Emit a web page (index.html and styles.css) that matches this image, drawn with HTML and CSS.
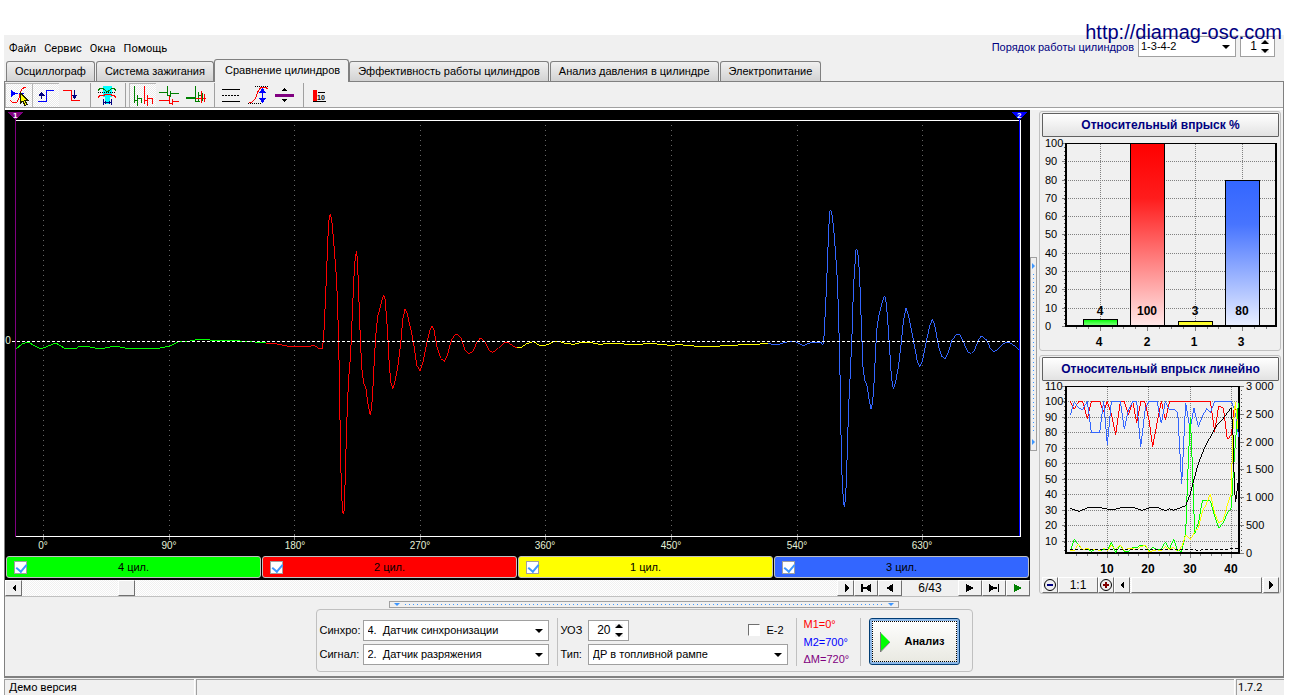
FILE: index.html
```html
<!DOCTYPE html>
<html lang="ru">
<head>
<meta charset="utf-8">
<title>Сравнение цилиндров</title>
<link rel="stylesheet" href="styles.css">
</head>
<body>
<a class="site-link" href="#site">http://diamag-osc.com</a>
<div class="app">
  <header class="topbar">
    <nav class="menu">
      <a href="#file">Файл</a><a href="#service">Сервис</a><a href="#windows">Окна</a><a href="#help">Помощь</a>
    </nav>
    <div class="order">
      <label for="order">Порядок работы цилиндров</label>
      <span class="select order-select"><select id="order"><option>1-3-4-2</option></select></span>
      <span class="spin"><input type="text" value="1" aria-label="Номер цилиндра"><span class="spin-btns"><button type="button" class="up" aria-label="Больше"></button><button type="button" class="down" aria-label="Меньше"></button></span></span>
    </div>
  </header>

  <nav class="tabs">
    <button type="button" class="tab">Осциллограф</button>
    <button type="button" class="tab">Система зажигания</button>
    <button type="button" class="tab active">Сравнение цилиндров</button>
    <button type="button" class="tab">Эффективность работы цилиндров</button>
    <button type="button" class="tab">Анализ давления в цилиндре</button>
    <button type="button" class="tab">Электропитание</button>
  </nav>

  <main class="page">
    <div class="toolbar">
      <button type="button" class="tool pressed" aria-label="Курсор">
        <svg viewBox="5 83 27 24"><path d="M10 100q2 3 5 3t5-9q1-6 6-7" fill="none" stroke="#f00"/><path d="M11 90v7l5-3.500z" fill="#00f"/><path d="M16 93.500h9" stroke="#00f" stroke-dasharray="2 1"/><path d="M20.500 93v10l2.300-2 2.200 4.500 2-1-2-4h3z" fill="#ff0" stroke="#220"/></svg></button>
      <button type="button" class="tool pressed" aria-label="Передний фронт">
        <svg viewBox="32 83 27 24"><path d="M38 101.500h8.500v-11H54" fill="none" stroke="#00f"/><path d="M41.500 99v-7" stroke="#000080"/><path d="M38.500 95.500h6l-3-4z" fill="#000080"/></svg></button>
      <button type="button" class="tool" aria-label="Задний фронт">
        <svg viewBox="59 83 27 24"><path d="M63 90.500h8.500v10H80" fill="none" stroke="#f00"/><path d="M74.500 90v7" stroke="#000080"/><path d="M71.500 95h6l-3 4z" fill="#000080"/></svg></button>
      <i class="sep"></i>
      <button type="button" class="tool" aria-label="Интервал">
        <svg viewBox="94 83 27 24"><path d="M103 86h9v11h-9zM105 97h5v7h-5z" fill="#0ff"/><path d="M98 90.500l2-2h3l4 3h1l4-3h2l2 2" fill="none" stroke="#008000"/><path d="M98 92.500h18" stroke="#000" stroke-dasharray="1 1"/><path d="M98 97.500l2-2h3l3-1h4l3 1h1l2 2" fill="none" stroke="#f00"/><path d="M103.500 99v6M111.500 99v6M104 102.500h7M105.500 101v3M109.500 101v3" stroke="#000080"/></svg></button>
      <i class="sep"></i>
      <button type="button" class="tool pressed" aria-label="Последовательно">
        <svg viewBox="129 83 27 24"><path d="M134.500 86v17M134 100.500h4M137.500 95v11M138 98.500h3.500v4" fill="none" stroke="#008000"/><path d="M144.500 86v18M144 100.500h4M147.500 95v11M148 98.500h4.500v5" fill="none" stroke="#f00"/></svg></button>
      <button type="button" class="tool" aria-label="Друг под другом">
        <svg viewBox="156 83 27 24"><path d="M159 92.500h9M167.500 86v10M168 95.500h3M170.500 91v6M171 93.500h8" fill="none" stroke="#008000"/><path d="M159 100.500h11M169.500 96v8M170 103.500h3M172.500 99v6M173 101.500h6" fill="none" stroke="#f00"/></svg></button>
      <button type="button" class="tool" aria-label="Наложение">
        <svg viewBox="183 83 27 24"><path d="M186 98h9" stroke="#008000" stroke-width="2"/><path d="M195.500 86v16M196 101.500h4M198.500 92v10M199 95.500h3" fill="none" stroke="#008000"/><path d="M196 98.500h10M201.500 91v12M204.500 94v8" fill="none" stroke="#f00"/><path d="M202.500 93v8" stroke="#008000"/></svg></button>
      <i class="sep"></i>
      <button type="button" class="tool" aria-label="Линии">
        <svg viewBox="218 83 27 24"><path d="M222 89.500h18M222 101.500h18" stroke="#000"/><path d="M222 95.500h18" stroke="#000" stroke-dasharray="2 1"/></svg></button>
      <button type="button" class="tool" aria-label="Размах">
        <svg viewBox="245 83 27 24"><path d="M249 103q5-1 7-6 2-8 6-10h3l3 2" fill="none" stroke="#f00"/><path d="M255 86.500h13M248 103.500h14" stroke="#000" stroke-dasharray="1 1"/><path d="M262.500 91v9" stroke="#00f"/><path d="M259 93l3.500-5 3.500 5zM259 98l3.500 5 3.500-5z" fill="#00f"/></svg></button>
      <button type="button" class="tool" aria-label="Сдвиг">
        <svg viewBox="272 83 27 24"><path d="M275 94h19v3h-19z" fill="#800080"/><path d="M282 91l2.500-3 2.500 3zM282 99l2.500 3 2.500-3z"/></svg></button>
      <i class="sep"></i>
      <button type="button" class="tool" aria-label="Усреднение">
        <svg viewBox="307 83 27 24"><path d="M313 90h4v11h-4z" fill="#f00"/><path d="M313 101.500h13M318 92.500h7" stroke="#000"/><text x="317" y="100" class="tiny">10</text></svg></button>
    </div>

    <div class="work">
      <section class="scope">
        <svg class="wave" viewBox="5 110 1025 446" role="img" aria-label="Осциллограмма">
          <path class="vgrid" d="M43.500 125V536M169.500 125V536M294.500 125V536M420.500 125V536M545.500 125V536M671.500 125V536M797.500 125V536M922.500 125V536"/>
          <path class="tick" d="M43.500 534v6M169.500 534v6M294.500 534v6M420.500 534v6M545.500 534v6M671.500 534v6M797.500 534v6M922.500 534v6"/>
          <path class="frame" d="M16 120.500H1020.500V536.500H16"/>
          <path d="M15.500 119V537" stroke="#800080"/><path d="M1019.500 119V536" stroke="#00f"/>
          <path d="M8 112h15l-7.500 8z" fill="#800080"/><path d="M1012 112h15l-7.500 8z" fill="#00f"/>
          <text class="mark" x="13" y="118">1</text><text class="mark" x="1017" y="118">2</text>
          <g class="trace">
            <polyline stroke="#0f0" points="16,349 22,344 28,342 35,346 41,349 48,346 56,343 64,348 75,349 80,346 90,347 100,349 115,346 125,348 150,349 160,348 170,346 178,342 190,341 200,339 210,340 225,340 240,341 255,342 266,343"/>
          </g>
          <g class="trace fine" transform="translate(240 190) scale(.33333)">
            <polyline stroke="#f00" points="78,460 105,461 140,468 195,469 205,471 222,465 235,474 247,477 251,440 254,380 257,315 260,240 263,158 266,98 269,74 272,74 277,107 283,180 289,258 292,325 295,423 298,551 300,687 302,815 305,918 308,965 310,973 313,960 317,812 320,710 323,627 326,565 332,490 338,345 341,280 344,220 349,184 352,205 356,305 359,393 362,473 366,540 371,580 377,590 382,630 388,662 391,676 395,652 398,608 401,548 407,440 413,380 425,335 431,314 435,326 439,375 443,430 448,530 453,578 458,596 464,580 475,520 483,450 488,390 495,358 500,365 515,430 523,475 530,525 540,542 548,520 560,460 570,420 576,408 582,420 592,475 602,505 613,515 622,495 634,452 642,437 652,432 662,442 675,480 686,491 698,485 712,455 721,444 735,455 748,482 758,487 775,475 792,458 805,458 820,468 832,474"/>
            <polyline stroke="#ff0" points="832,474 842,474 860,461 880,455 898,466 920,465 945,454 960,455 975,460 1000,463 1020,458 1050,457 1080,463 1110,460 1150,462 1190,464 1220,461 1250,462 1290,466 1320,464 1360,468 1400,470 1440,468 1480,466 1520,463 1550,463 1583,460"/>
          </g>
          <g class="trace fine" transform="translate(760 190) scale(.33333)">
            <polyline stroke="#36f" points="23,460 50,465 80,456 105,455 130,467 150,459 185,458 188,466 191,458 194,400 197,345 200,275 206,118 210,62 214,62 220,105 226,180 232,270 235,355 238,467 241,597 243,732 246,855 250,932 253,952 257,920 260,845 263,745 266,650 271,545 277,410 280,300 284,235 288,180 292,180 296,210 300,290 305,430 309,530 314,572 320,582 326,620 333,658 337,640 341,600 344,540 350,420 355,385 366,338 374,317 379,340 384,405 389,480 394,560 400,596 407,575 416,525 424,455 430,395 438,354 445,375 460,450 472,515 479,531 488,510 500,450 510,405 517,388 524,405 536,470 546,500 556,506 564,490 576,450 590,433 600,435 612,460 624,487 634,490 644,480 656,448 664,438 680,450 692,477 702,485 715,477 730,461 742,456 758,463 776,478"/>
          </g>
          <path class="zero" d="M12 341.500H1018"/>
          <g class="deg"><text x="8" y="344">0</text><text x="43" y="549">0°</text><text x="169" y="549">90°</text><text x="295" y="549">180°</text><text x="420" y="549">270°</text><text x="545" y="549">360°</text><text x="671" y="549">450°</text><text x="797" y="549">540°</text><text x="922" y="549">630°</text></g>
        </svg>
        <div class="legend">
          <label class="cyl green"><input type="checkbox" checked><span>4 цил.</span></label>
          <label class="cyl red"><input type="checkbox" checked><span>2 цил.</span></label>
          <label class="cyl yellow"><input type="checkbox" checked><span>1 цил.</span></label>
          <label class="cyl blue"><input type="checkbox" checked><span>3 цил.</span></label>
        </div>
        <div class="scroller">
          <button type="button" class="sbtn" aria-label="Влево"><svg viewBox="0 0 10 10"><path d="M7 1v8L3 5z"/></svg></button>
          <input type="range" class="track" min="0" max="100" value="12" aria-label="Положение">
          <button type="button" class="sbtn" aria-label="Вправо"><svg viewBox="0 0 10 10"><path d="M4 1v8l4-4z"/></svg></button>
          <button type="button" class="nav-btn" aria-label="Первый кадр"><svg viewBox="0 0 12 10"><path d="M1 1h1.500v8H1zM11 1v8L6 6H3V4h3z"/></svg></button>
          <button type="button" class="nav-btn" aria-label="Предыдущий кадр"><svg viewBox="0 0 12 10"><path d="M9 1v8L2 5z"/></svg></button>
          <output class="frame-no">6/43</output>
          <button type="button" class="nav-btn" aria-label="Следующий кадр"><svg viewBox="0 0 12 10"><path d="M2 1v8l8-4z"/></svg></button>
          <button type="button" class="nav-btn" aria-label="Последний кадр"><svg viewBox="0 0 12 10"><path d="M9.500 1H11v8H9.500zM1 1v8l5-3h3V4H6z"/></svg></button>
          <button type="button" class="nav-btn" aria-label="Пуск"><svg viewBox="0 0 12 10"><path d="M2 1v8l8-4z" fill="#008000"/></svg></button>
        </div>
      </section>

      <div class="vsplit"><i class="tri-r"></i><i class="dots"></i><i class="tri-r"></i></div>

      <aside class="side">
        <section class="group">
          <button type="button" class="caption">Относительный впрыск %</button>
          <svg class="chart" viewBox="1042 137 237 213" role="img" aria-label="Относительный впрыск %">
            <defs>
              <linearGradient id="g-red" x2="0" y2="1"><stop stop-color="#f00"/><stop offset=".3" stop-color="#ff1c1c"/><stop offset="1" stop-color="#ffe8e8"/></linearGradient>
              <linearGradient id="g-blue" x2="0" y2="1"><stop stop-color="#36f"/><stop offset=".3" stop-color="#4774ff"/><stop offset="1" stop-color="#e8eeff"/></linearGradient>
              <linearGradient id="g-green" x2="0" y2="1"><stop stop-color="#0f0"/><stop offset="1" stop-color="#80ff80"/></linearGradient>
              <linearGradient id="g-yellow" x2="0" y2="1"><stop stop-color="#ff0"/><stop offset="1" stop-color="#ffff60"/></linearGradient>
            </defs>
            <path class="cgrid" d="M1066 161.500H1275M1066 180.500H1275M1066 198.500H1275M1066 216.500H1275M1066 234.500H1275M1066 253.500H1275M1066 271.500H1275M1066 289.500H1275M1066 308.500H1275M1100.500 144V325M1147.500 144V325M1195.500 144V325M1242.500 144V325"/>
            <path class="ctick" d="M1062 143.500h4M1062 161.500h4M1062 180.500h4M1062 198.500h4M1062 216.500h4M1062 234.500h4M1062 253.500h4M1062 271.500h4M1062 289.500h4M1062 308.500h4M1062 326.500h4M1076.500 327v2M1088.500 327v2M1100.500 327v4M1112.500 327v2M1123.500 327v2M1135.500 327v2M1147.500 327v4M1159.500 327v2M1171.500 327v2M1183.500 327v2M1195.500 327v4M1207.500 327v2M1218.500 327v2M1230.500 327v2M1242.500 327v4M1254.500 327v2M1266.500 327v2"/>
            <path d="M1064.500 147V325" stroke="#555" stroke-dasharray="1 3"/>
            <g stroke="#000"><rect x="1083.500" y="319.500" width="34" height="6" fill="url(#g-green)"/><rect x="1130.500" y="143.500" width="34" height="182" fill="url(#g-red)"/><rect x="1178.500" y="321.500" width="34" height="4" fill="url(#g-yellow)"/><rect x="1225.500" y="180.500" width="34" height="145" fill="url(#g-blue)"/></g>
            <path class="plot" d="M1066 143V326H1276V143"/><path d="M1065 143.500H1277" stroke="#000"/>
            <g class="axis"><text x="1045" y="147">100</text><text x="1045" y="165">90</text><text x="1045" y="184">80</text><text x="1045" y="202">70</text><text x="1045" y="220">60</text><text x="1045" y="238">50</text><text x="1045" y="257">40</text><text x="1045" y="275">30</text><text x="1045" y="293">20</text><text x="1045" y="312">10</text><text x="1045" y="330">0</text></g>
            <g class="value"><text x="1100" y="315">4</text><text x="1147" y="315">100</text><text x="1195" y="315">3</text><text x="1242" y="315">80</text><text x="1099" y="346">4</text><text x="1147" y="346">2</text><text x="1194" y="346">1</text><text x="1241" y="346">3</text></g>
          </svg>
        </section>

        <section class="group">
          <button type="button" class="caption">Относительный впрыск линейно</button>
          <svg class="chart" viewBox="1042 381 237 196" role="img" aria-label="Относительный впрыск линейно">
            <path class="cgrid" d="M1066 401.500H1239M1066 417.500H1239M1066 432.500H1239M1066 448.500H1239M1066 463.500H1239M1066 479.500H1239M1066 494.500H1239M1066 510.500H1239M1066 525.500H1239M1066 541.500H1239M1107.500 387V552M1148.500 387V552M1190.500 387V552M1231.500 387V552"/>
            <path class="ctick" d="M1062 386.500h4M1062 401.500h4M1062 417.500h4M1062 432.500h4M1062 448.500h4M1062 463.500h4M1062 479.500h4M1062 494.500h4M1062 510.500h4M1062 525.500h4M1062 541.500h4M1240 386.500h4M1240 414.500h4M1240 442.500h4M1240 469.500h4M1240 497.500h4M1240 525.500h4M1240 553.500h4M1076.500 554v2M1087.500 554v2M1097.500 554v2M1107.500 554v4M1118.500 554v2M1128.500 554v2M1138.500 554v2M1148.500 554v4M1159.500 554v2M1169.500 554v2M1180.500 554v2M1190.500 554v4M1200.500 554v2M1211.500 554v2M1221.500 554v2M1231.500 554v4"/>
            <path d="M1064.500 390V552M1241.500 390V552" stroke="#555" stroke-dasharray="1 3"/>
            <path class="plot" d="M1066 386V553H1239V386"/><path d="M1065 386.500H1240" stroke="#000"/>
            <g class="trace fine" transform="translate(1030 350) scale(.33333)">
              <polyline stroke="#f00" points="121,154 133,178 146,154 158,154 172,206 184,154 209,154 221,186 232,154 246,200 257,254 271,154 283,154 295,195 308,154 320,218 333,154 344,154 357,210 368,290 381,220 394,154 406,210 419,154 541,154 554,245 566,168 580,174 592,268 604,255 612,180 622,180"/>
              <polyline stroke="#36f" points="121,194 133,156 146,175 158,178 172,154 184,247 209,247 221,154 232,284 244,154 271,154 283,238 295,180 308,154 320,154 332,291 346,175 357,154 381,154 394,220 406,154 418,178 431,178 443,187 455,402 467,158 480,238 492,175 505,230 517,200 530,175 541,188 554,154 604,154 612,175 620,210 626,262"/>
              <polyline stroke="#0f0" points="121,604 133,568 145,584 158,600 172,597 184,604 197,597 210,603 221,597 233,598 244,576 257,608 271,585 283,604 295,604 308,592 320,594 332,585 346,587 357,602 368,592 381,598 394,598 406,576 418,598 431,568 443,602 455,604 467,550 475,330 481,201 488,370 494,553 505,520 517,452 541,452 554,498 566,535 580,518 592,490 604,473 611,350 625,160"/>
              <polyline stroke="#ff0" points="121,602 133,602 145,582 158,600 172,595 184,600 197,597 210,603 221,595 233,602 244,585 257,598 271,585 283,602 295,594 308,596 320,600 332,590 346,586 357,605 381,599 394,602 406,590 418,598 431,592 443,604 455,590 467,555 481,569 494,545 505,535 517,485 530,460 541,432 554,490 566,518 580,510 592,465 604,428 608,250 616,155 624,238"/>
              <polyline stroke="#000" points="121,475 146,484 172,474 197,471 221,475 246,480 271,474 308,472 337,481 362,472 381,472 406,482 418,476 431,481 443,476 455,472 467,467 480,435 492,388 505,340 517,310 530,280 543,258 556,232 580,205 604,173 610,270 613,415 617,457 620,430 625,390"/>
              <polyline stroke="#000" stroke-dasharray="9 6" points="121,600 460,600 480,598 505,601 530,598 555,600 590,600 605,596 625,596"/>
            </g>
            <g class="axis"><text x="1045" y="390">110</text><text x="1045" y="405">100</text><text x="1045" y="421">90</text><text x="1045" y="436">80</text><text x="1045" y="452">70</text><text x="1045" y="467">60</text><text x="1045" y="483">50</text><text x="1045" y="498">40</text><text x="1045" y="514">30</text><text x="1045" y="529">20</text><text x="1045" y="545">10</text><text x="1246" y="390">3 000</text><text x="1246" y="418">2 500</text><text x="1246" y="446">2 000</text><text x="1246" y="473">1 500</text><text x="1246" y="501">1 000</text><text x="1246" y="529">500</text><text x="1246" y="557">0</text></g>
            <g class="value"><text x="1107" y="573">10</text><text x="1148" y="573">20</text><text x="1190" y="573">30</text><text x="1231" y="573">40</text></g>
          </svg>
          <div class="zoombar">
            <button type="button" class="sbtn" aria-label="Уменьшить"><svg viewBox="0 0 14 14" class="big"><circle cx="7" cy="7" r="5.500" fill="none" stroke="#000"/><path d="M4 6h6v2H4z" fill="#000080"/></svg></button>
            <button type="button" class="sbtn ratio">1:1</button>
            <button type="button" class="sbtn" aria-label="Увеличить"><svg viewBox="0 0 14 14" class="big"><circle cx="7" cy="7" r="5.500" fill="none" stroke="#000"/><path d="M4 6h2V4h2v2h2v2H8v2H6V8H4z" fill="#800000"/></svg></button>
            <button type="button" class="sbtn" aria-label="Влево"><svg viewBox="0 0 10 10"><path d="M7 1v8L3 5z"/></svg></button>
            <input type="range" class="track full" aria-label="Прокрутка графика">
            <button type="button" class="sbtn" aria-label="Вправо"><svg viewBox="0 0 10 10"><path d="M3 1v8l4-4z"/></svg></button>
          </div>
        </section>
      </aside>
    </div>

    <div class="hsplit"><i class="tri-d"></i><i class="dots"></i><i class="tri-d"></i></div>

    <form class="settings">
      <div class="fields sources">
        <label for="sync">Синхро:</label>
        <span class="select"><select id="sync"><option>4.&nbsp; Датчик синхронизации</option></select></span>
        <label for="signal">Сигнал:</label>
        <span class="select"><select id="signal"><option>2.&nbsp; Датчик разряжения</option></select></span>
      </div>
      <div class="fields kind">
        <label for="uoz">УОЗ</label>
        <div class="uoz-row">
          <span class="spin"><input id="uoz" type="text" value="20"><span class="spin-btns"><button type="button" class="up" aria-label="Больше"></button><button type="button" class="down" aria-label="Меньше"></button></span></span>
          <label class="e2"><input type="checkbox">E-2</label>
        </div>
        <label for="type">Тип:</label>
        <span class="select"><select id="type"><option>ДР в топливной рампе</option></select></span>
      </div>
      <div class="marks"><span class="m1">M1=0°</span><span class="m2">M2=700°</span><span class="dm">ΔM=720°</span></div>
      <button type="button" class="analyse"><span><svg viewBox="0 0 10 20"><path d="M0 0v20l10-10z" fill="#0f0"/><path d="M.5 0v20l9.500-10" fill="none" stroke="#777"/></svg>Анализ</span></button>
    </form>
  </main>

  <footer class="status"><span>Демо версия</span><span></span><span>1.7.2</span></footer>
</div>
</body>
</html>
```
FILE: styles.css
```css
* { box-sizing: border-box; }
body {
  margin: 0;
  padding: 35px 12px 5px 4px;
  background: #fff;
  color: #000;
  font: 11px/13px "Liberation Sans", Arial, sans-serif;
}
button, input, select { font: inherit; color: inherit; margin: 0; padding: 0; }
a { color: inherit; text-decoration: none; }
svg { display: block; shape-rendering: crispEdges; }

.site-link {
  position: absolute;
  top: 20px;
  right: 14px;
  z-index: 2;
  color: #000080;
  font-size: 20px;
  line-height: 24px;
}
.app { background: #f0f0f0; }
.topbar { display: flex; justify-content: space-between; height: 24px; padding: 1px 9px 0 5px; }
.menu { display: flex; gap: 8px; padding-top: 6px; font-family: Roboto, sans-serif; }
.order { display: flex; gap: 4px; color: #000080; }
.order > label { padding: 5px 0 0; }
.order-select { width: 98px; }
.order .spin { width: 35px; }

/* drop-downs and spinners */
.select { position: relative; display: block; height: 21px; color: #000; }
.select select {
  display: block;
  width: 100%;
  height: 100%;
  padding: 0 16px 0 4px;
  appearance: none;
  border: 1px solid #a0a0a0;
  border-radius: 0;
  background: #fff;
}
.order-select select { padding-left: 2px; }
.select::after {
  content: "";
  position: absolute;
  right: 6px;
  top: 9px;
  border: 4px solid transparent;
  border-top-color: #000;
  border-bottom: 0;
  pointer-events: none;
}
.spin { display: flex; height: 21px; width: 41px; border: 1px solid #a0a0a0; background: #fff; color: #000; }
.spin input { flex: 1; min-width: 0; border: 0; background: none; text-align: right; font-size: 12px; }
.spin-btns { display: flex; flex-direction: column; justify-content: center; gap: 5px; padding: 0 5px 0 4px; }
.spin-btns button { width: 0; height: 0; border: 4px solid transparent; }
.spin-btns .up { border-top: 0; border-bottom-color: #000; }
.spin-btns .down { border-bottom: 0; border-top-color: #000; }

/* tabs */
.tabs { display: flex; align-items: flex-end; height: 22px; padding-left: 2px; gap: 1px; }
.tab {
  height: 20px;
  padding: 0 8px;
  border: 1px solid #808080;
  border-bottom: 0;
  border-radius: 3px 3px 0 0;
  background: linear-gradient(#f0f0f0, #d2d2d2);
  white-space: nowrap;
}
.tab.active {
  z-index: 1;
  height: 23px;
  margin: 0 -1px -1px;
  padding: 0 8px 1px 10px;
  background: #f0f0f0;
}

.page { border: 1px solid #808080; border-bottom-width: 2px; }
.toolbar { display: flex; height: 28px; padding-top: 1px; border-bottom: 2px solid #fff; box-shadow: inset 0 -1px #a0a0a0; }
.tool { width: 27px; height: 24px; border: 0; background: none; }
.tool svg { width: 27px; height: 24px; }
.tool.pressed {
  background: repeating-conic-gradient(#fff 0 25%, #eaeaea 0 50%) 0 0 / 2px 2px;
  box-shadow: inset 1px 1px #b4b4b4;
}
.tiny { font: bold 7px "Liberation Sans", sans-serif; }
.sep { width: 8px; height: 24px; background: linear-gradient(#a0a0a0, #a0a0a0) 4px 0 / 1px 24px no-repeat; }

/* main work area */
.work { display: grid; grid-template-columns: minmax(0, 1fr) 9px 242px; padding-right: 2px; }
.scope { border-bottom: 1px solid #c0c0c0; }
.wave { width: 100%; background: #000; }
.vgrid { stroke: #666; stroke-dasharray: 1 4; }
.tick { stroke: #808080; }
.frame { fill: none; stroke: #fff; }
.zero { stroke: #fff; stroke-dasharray: 3 2; }
.trace { fill: none; stroke-width: 1; }
.trace.fine { stroke-width: 3; }
.mark { fill: #fff; font: bold 8px "Liberation Sans", sans-serif; }
.deg { fill: #e4f0d8; font-size: 10px; text-anchor: middle; }

.legend { display: grid; grid-template-columns: repeat(4, 1fr); gap: 1px; padding: 0 1px 2px; background: #000; }
.cyl {
  display: flex;
  align-items: center;
  height: 22px;
  padding: 0 20px 0 7px;
  border: 1px solid #c0c0c0;
  border-radius: 3px;
  text-align: center;
}
.cyl span { flex: 1; }
.cyl input {
  width: 13px;
  height: 13px;
  appearance: none;
  border: 1px solid #a0a0a0;
  background: #fff;
}
.cyl input::before {
  content: "";
  display: block;
  width: 5px;
  height: 8px;
  margin: 0 0 0 3px;
  border: solid #3c96ff;
  border-width: 0 2px 2px 0;
  transform: rotate(40deg);
}
.green { background: #0f0; }
.red { background: #f00; }
.yellow { background: #ff0; }
.blue { background: #36f; }

.scroller, .zoombar { display: flex; height: 16px; }
.sbtn, .nav-btn {
  display: flex;
  align-items: center;
  justify-content: center;
  width: 17px;
  border: 1px solid;
  border-color: #fff #707070 #707070 #fff;
  background: #f0f0f0;
}
.nav-btn { width: 24px; }
.sbtn svg { width: 10px; height: 10px; }
.sbtn svg.big { width: 14px; height: 14px; flex: none; shape-rendering: auto; }
.nav-btn svg { width: 12px; height: 10px; }
.track {
  flex: 1;
  min-width: 0;
  height: 16px;
  appearance: none;
  background: repeating-conic-gradient(#fff 0 25%, #f0f0f0 0 50%) 0 0 / 2px 2px;
}
.track::-webkit-slider-thumb {
  appearance: none;
  width: 17px;
  height: 16px;
  border: 1px solid;
  border-color: #fff #707070 #707070 #fff;
  background: #f0f0f0;
}
.track.full::-webkit-slider-thumb { width: 131px; }
.frame-no { width: 56px; text-align: center; font-size: 12px; line-height: 17px; }

/* collapse handles */
.vsplit, .hsplit { display: flex; align-items: center; justify-content: space-between; border: 1px solid #a0a0a0; }
.vsplit { flex-direction: column; align-self: center; width: 7px; height: 194px; padding: 5px 0; }
.hsplit { width: 510px; height: 7px; margin: 4px auto 1px; padding: 0 4px; }
.vsplit .dots { flex: 1; width: 1px; margin: 5px 0; background: repeating-linear-gradient(#3c96ff 0 1px, transparent 1px 4px); }
.hsplit .dots { flex: 1; height: 1px; margin: 0 5px; background: repeating-linear-gradient(90deg, #3c96ff 0 1px, transparent 1px 4px); }
.tri-r { border: 3px solid transparent; border-left-color: #3c96ff; border-right: 0; }
.tri-d { border: 3px solid transparent; border-top-color: #3c96ff; border-bottom: 0; }

/* charts */
.side { display: flex; flex-direction: column; gap: 4px; padding-top: 1px; }
.group { padding: 1px 1px 0 2px; border: 1px solid #c0c0c0; border-radius: 3px; }
.caption {
  display: block;
  width: 100%;
  height: 24px;
  border: 1px solid #606060;
  border-radius: 1px;
  background: linear-gradient(#fff, #e2e2e2);
  color: #000080;
  font-size: 12px;
  font-weight: bold;
}
.chart { width: 100%; }
.cgrid { stroke: #808080; stroke-dasharray: 1 1; }
.ctick { stroke: #808080; }
.plot { fill: none; stroke: #000; stroke-width: 2; }
.axis { font-size: 11px; }
.value { font-size: 12px; font-weight: bold; text-anchor: middle; }
.zoombar .sbtn { width: 16px; }
.zoombar .ratio { width: 40px; font-size: 12px; }

/* settings */
.settings {
  display: flex;
  width: max-content;
  height: 63px;
  margin: 0 auto 4px;
  padding: 8px 12px 5px 3px;
  border: 1px solid #c0c0c0;
  border-radius: 4px;
}
.fields { display: grid; align-content: center; align-items: center; gap: 3px 4px; border-right: 1px solid #c0c0c0; }
.sources { grid-template-columns: 39px 186px; padding-right: 8px; }
.kind { grid-template-columns: 23px 200px; padding: 0 8px 0 3px; }
.uoz-row { display: flex; justify-content: space-between; }
.e2 { display: flex; align-items: center; gap: 6px; padding-right: 4px; }
.e2 input {
  width: 12px;
  height: 12px;
  appearance: none;
  border: 1px solid;
  border-color: #707070 #fff #fff #707070;
  background: #fff;
}
.marks { display: flex; flex-direction: column; justify-content: space-between; width: 64px; margin-right: 8px; padding-left: 7px; border-right: 1px solid #c0c0c0; }
.m1 { color: #f00; }
.m2 { color: #00f; }
.dm { color: #800080; }
.analyse {
  width: 91px;
  height: 47px;
  padding: 2px;
  border: 1px solid #003c74;
  border-radius: 3px;
  background: linear-gradient(#fff, #e8e8e0);
  box-shadow: inset 0 0 0 2px #8db8e8;
  font-weight: bold;
}
.analyse span { display: flex; align-items: center; gap: 15px; height: 100%; padding-left: 7px; border: 1px dotted #000; }
.analyse svg { width: 10px; height: 20px; shape-rendering: auto; }

.status { display: grid; grid-template-columns: 190px 1fr 48px; gap: 2px; padding-top: 1px; font-family: Roboto, sans-serif; }
.status span { height: 16px; padding: 1px 4px; border: solid #a0a0a0; border-width: 1px 0 0 1px; box-shadow: 1px 0 #fff; }
.status span:last-child { padding-left: 1px; }
```
